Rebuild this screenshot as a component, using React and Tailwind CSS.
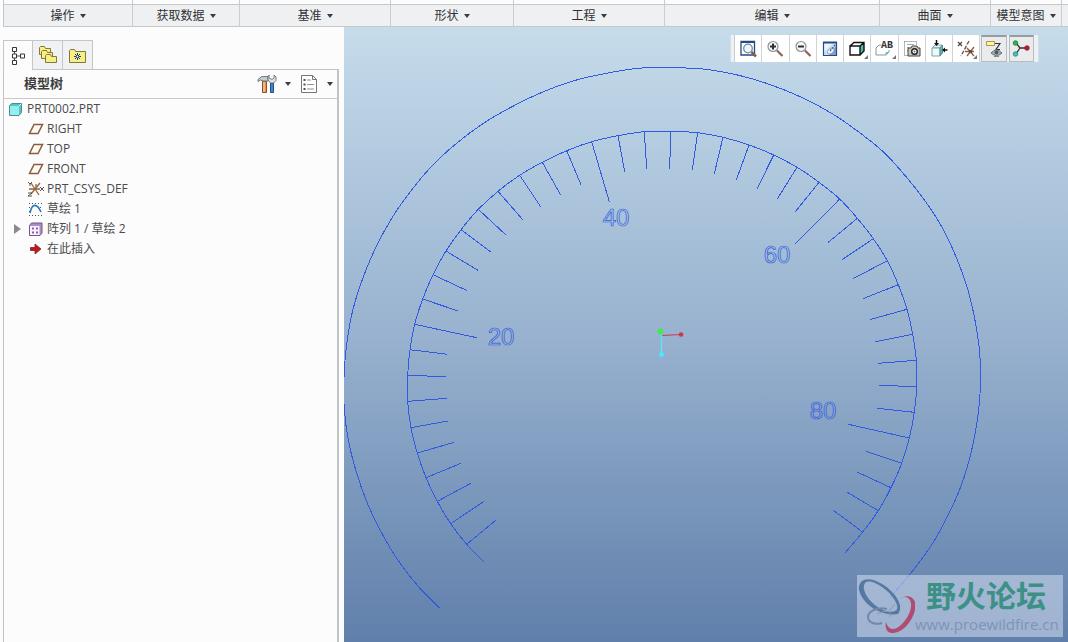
import React from "react";

const menus = [
  { label: "操作", col: "w-[129px]" },
  { label: "获取数据", col: "w-[107px]" },
  { label: "基准", col: "w-[151px]" },
  { label: "形状", col: "w-[123px]" },
  { label: "工程", col: "w-[151px]" },
  { label: "编辑", col: "w-[215px]" },
  { label: "曲面", col: "w-[111px]" },
  { label: "模型意图", col: "w-[71px]" },
];

// Each tick: rim x, rim y, inner x, inner y
const ticks = [
  [466.7, 544.3, 496, 520], [450.7, 523.7, 484, 501.3], [437.3, 501.3, 471.3, 483],
  [426, 477.7, 461, 463.3], [417.3, 453, 454.3, 442.3], [411, 427.7, 447.7, 421],
  [407.7, 401.3, 446.7, 398.3], [407.7, 375.3, 446.3, 376.7], [410, 349.7, 447.3, 354.3],
  [414.7, 324.3, 476.7, 337.7], [422.7, 299, 458.3, 311], [433, 274.7, 467.3, 290.7],
  [446, 251, 478, 270.3], [461, 229.7, 491, 252], [478.3, 209.3, 506, 235],
  [498, 191.3, 523, 220], [519.7, 175.3, 540.7, 206.7], [542.3, 162.3, 560.7, 195],
  [566.7, 150.7, 581, 184.7], [591.7, 141.7, 609.3, 201.7], [618, 135.7, 624.7, 171.7],
  [644.3, 131.7, 646.7, 169], [670.7, 131.3, 669.7, 169], [697.7, 132.7, 692.3, 170],
  [723, 137.3, 714.3, 173.7], [749, 145, 736.3, 180], [773.7, 155, 757, 189],
  [797, 167.3, 777.3, 199], [819, 182.3, 795.3, 211.7], [839.7, 199, 795.3, 244],
  [857.3, 218.3, 828.3, 242.3], [873.3, 238.7, 842, 259.7], [887.3, 260.7, 853, 278.7],
  [898.3, 284.7, 863, 298.7], [907, 309.3, 869.7, 319.7], [912.7, 334.3, 875.3, 341.7],
  [916.3, 360.3, 878.3, 363.3], [916.7, 386.7, 879.3, 385.3], [914.3, 412.3, 877.3, 408.3],
  [909.3, 438, 848.3, 424.3], [901.7, 463.3, 866, 451.3], [891, 487.7, 857, 472],
  [878.3, 510.7, 846.7, 492], [862.7, 532, 833.3, 510.3],
];

const innerArc = [[484, 562], ...ticks.map(([x, y]) => [x, y]), [845, 553]];

// The outer rim is the inner one enlarged about the dial's centre
const outerArc = innerArc.map(([x, y]) => [662 + (x - 662) * 1.25, 381 + (y - 381) * 1.255]);

function smooth(points) {
  let d = `M${points[0][0]} ${points[0][1]}`;
  for (let i = 0; i < points.length - 1; i++) {
    const a = points[Math.max(0, i - 1)];
    const b = points[i];
    const c = points[i + 1];
    const e = points[Math.min(points.length - 1, i + 2)];
    d += `C${b[0] + (c[0] - a[0]) / 6} ${b[1] + (c[1] - a[1]) / 6} ${c[0] - (e[0] - b[0]) / 6} ${c[1] - (e[1] - b[1]) / 6} ${c[0]} ${c[1]}`;
  }
  return d;
}

const tickPath = ticks.map(([a, b, c, d]) => `M${a} ${b}L${c} ${d}`).join("");

function Caret() {
  return (
    <svg width="6" height="4" viewBox="0 0 6 4" aria-hidden="true" className="shrink-0">
      <path d="M0 0h6L3 4z" fill="#3c3c40" />
    </svg>
  );
}

function Svg({ size = 18, children }) {
  return (
    <svg width={size} height={size} viewBox={`0 0 ${size} ${size}`} fill="none" aria-hidden="true" className="shrink-0">
      {children}
    </svg>
  );
}

function MenuBar() {
  return (
    <nav aria-label="功能区" className="flex h-[27px] shrink-0 overflow-hidden bg-[#fcfcfd] pl-[3px]">
      <div className="flex grow border-l border-[#c3c6ca]">
        {menus.map((m) => (
          <div key={m.label} className={`${m.col} shrink-0 border-r border-[#c9cdd1] pt-1`}>
            <button type="button" className="flex h-[23px] w-full items-center justify-center gap-[5px] whitespace-nowrap border-y border-[#c6c9cc] bg-[#eff0f2]">
              {m.label}
              <Caret />
            </button>
          </div>
        ))}
        <div className="grow pt-1">
          <div className="h-[23px] border-y border-[#c6c9cc] bg-[#eff0f2]" />
        </div>
      </div>
    </nav>
  );
}

function Magnifier({ sign }) {
  return (
    <Svg>
      <path d="M11 10.500l5.500 5.500" stroke="#8a6658" strokeWidth="2.200" />
      <circle cx="7" cy="6.500" r="5" fill="#f6f8f8" stroke="#8d9193" strokeWidth="1.200" />
      <path d={sign === "+" ? "M4 6.500h6M7 3.500v6" : "M4 6.500h6"} stroke="#303030" strokeWidth="2" />
    </Svg>
  );
}

const tools = [
  {
    name: "重新调整",
    icon: (
      <Svg>
        <path d="M2 1.500h13.500v13.500H2z" fill="#fff" stroke="#244a83" strokeWidth="1.300" />
        <path d="M2 2h14" stroke="#244a83" strokeWidth="2" />
        <circle cx="9" cy="8.500" r="4.300" fill="#eef5f8" stroke="#72879a" strokeWidth="1.300" />
        <path d="M12.500 12l4.500 4.500" stroke="#7d6259" strokeWidth="2.500" />
      </Svg>
    ),
  },
  { name: "放大", icon: <Magnifier sign="+" /> },
  { name: "缩小", icon: <Magnifier sign="-" /> },
  {
    name: "重画",
    icon: (
      <Svg>
        <path d="M2.500 2.500h13v13h-13z" fill="#cfe0f5" />
        <path d="M3 3h9L3 12z" fill="#edf5fd" />
        <path d="M15 6v9H8z" fill="#7f9fd0" />
        <path d="M7 14c-1-3 0-5 3-6l3 1c0 3-2 5-6 5z" fill="#f3f7fd" stroke="#8296b8" strokeWidth=".8" />
        <path d="M9 11l6-7" stroke="#33507f" strokeWidth="1.200" strokeDasharray="2 1" />
        <path d="M2.500 2.500h13v13h-13z" stroke="#234c89" strokeWidth="1.200" />
        <path d="M2 2.500h14" stroke="#234c89" strokeWidth="2" />
      </Svg>
    ),
  },
  {
    name: "显示样式", more: true,
    icon: (
      <Svg>
        <path d="M2 6l4-3.500h10L12 6z" fill="#fff" />
        <path d="M12 6l4-3.500v8.500l-4 4z" fill="#49b9a8" />
        <path d="M2 6h10v9H2zM2 6l4-3.500h10V11l-4 4M12 6l4-3.500" stroke="#111" strokeWidth="1.400" />
      </Svg>
    ),
  },
  {
    name: "已保存方向", more: true,
    icon: (
      <Svg>
        <path d="M1 15V8l3-3h2M1 15h10l3-3v-2" stroke="#8198a3" />
        <path d="M10 15l1-3h3z" fill="#65bdbd" />
        <text x="6" y="8" fill="#333" className="font-['Liberation_Mono'] text-[10px] font-bold">AB</text>
      </Svg>
    ),
  },
  {
    name: "视图管理器",
    icon: (
      <Svg>
        <path d="M1.500 1.500h12v4M1.500 1.500v14h4" stroke="#6a6c6e" strokeDasharray="1 1" />
        <path d="M4 4.500h7M4 7.500h2M4 10.500h1" stroke="#a4a9ac" />
        <path d="M5 8h3l1-2h5l1 2h2v8H5z" fill="#c9cabb" stroke="#43443f" />
        <circle cx="11.500" cy="11.500" r="2.800" fill="#fff" stroke="#222" strokeWidth="1.400" />
        <circle cx="11.500" cy="11.500" r="1" fill="#777" />
      </Svg>
    ),
  },
  {
    name: "截面",
    icon: (
      <Svg>
        <path d="M2 8l3-3h7l-2 3z" fill="#d9f4f4" stroke="#89a7ac" />
        <path d="M2 8h8v8H2z" fill="#ecfafa" stroke="#82a4a9" />
        <path d="M10 8l2.500-3v8L10 16z" fill="#4ebab8" stroke="#648f91" />
        <path d="M6.500 0v4M17.500 10H14" stroke="#111" strokeWidth="1.500" />
        <path d="M4 3h5L6.500 6zM15 7.500v5L12 10z" fill="#111" />
      </Svg>
    ),
  },
  {
    name: "基准显示过滤器", more: true,
    icon: (
      <Svg>
        <path d="M1 2l4 4M5 2L1 6" stroke="#5c4138" strokeWidth="1.200" />
        <path d="M12 1L4 16" stroke="#765449" strokeWidth="1.400" strokeDasharray="4 1.500" />
        <path d="M10 8l7 8M17 7l-7 9M8 11.500h9" stroke="#8c5f46" strokeWidth="1.300" />
        <path d="M12 10h3v3h-3z" fill="#6d4635" />
      </Svg>
    ),
  },
  {
    name: "注释显示", active: true,
    icon: (
      <Svg>
        <path d="M1.500 1.500h8v4h-8z" fill="#fff4a3" stroke="#a99744" />
        <path d="M10 3.500h5l-4 6h4" stroke="#333" strokeWidth="1.200" />
        <path d="M6 13q5.500-6 11 0q-5.500 5-11 0z" fill="#a3aeb3" stroke="#657278" />
        <circle cx="11.500" cy="12.500" r="1.800" fill="#43545c" />
        <path d="M9 16.500h5" stroke="#81898c" />
      </Svg>
    ),
  },
  {
    name: "旋转中心", active: true,
    icon: (
      <Svg>
        <path d="M4 3l4 5h7M8 8l-4 6" stroke="#333" strokeWidth="1.300" />
        <circle cx="3.500" cy="3" r="2.300" fill="#26b948" stroke="#176e34" strokeWidth=".7" />
        <circle cx="15" cy="8" r="2.300" fill="#c81b2c" stroke="#76111d" strokeWidth=".7" />
        <circle cx="3.500" cy="14" r="2.300" fill="#37cabb" stroke="#24777c" strokeWidth=".7" />
      </Svg>
    ),
  },
];

function ViewToolbar() {
  return (
    <div role="toolbar" aria-label="视图" className="absolute right-[29px] top-2 flex h-[27px] w-[309px] border-x border-[#d6dee5] bg-[#eef1f4] pl-[3px] pr-[3px]">
      <div className="grid grow grid-cols-11 border-l border-[#c9cdd0]">
        {tools.map((t) => (
          <button
            key={t.name}
            type="button"
            aria-label={t.name}
            className={
              t.active
                ? "mx-px flex items-center justify-center border border-t-2 border-[#b9bcbf] border-t-[#999c9f] bg-[#e9ebed]"
                : "relative flex items-center justify-center border-r border-[#cfd3d6] bg-white"
            }
          >
            {t.icon}
            {t.more && (
              <svg width="4" height="4" viewBox="0 0 4 4" aria-hidden="true" className="absolute bottom-[3px] right-[2px]">
                <path d="M4 0v4H0z" fill="#777" />
              </svg>
            )}
          </button>
        ))}
      </div>
    </div>
  );
}

function Plane() {
  return (
    <Svg size={16}>
      <path d="M1.500 12.500L6 3.500h8.500L10 12.500z" fill="#fffaf4" stroke="#8a5a42" strokeWidth="1.5" />
    </Svg>
  );
}

const rows = [
  { label: "RIGHT", icon: <Plane /> },
  { label: "TOP", icon: <Plane /> },
  { label: "FRONT", icon: <Plane /> },
  {
    label: "PRT_CSYS_DEF",
    icon: (
      <Svg size={16}>
        <path d="M3 2l8 12M12 2L3 13M1 8h11M8 8V3" stroke="#94663f" strokeWidth="1.3" />
        <path d="M0 1l2 2 2-2M2 3v2M12 6l4 4M16 6l-4 4M0 12h4l-4 3h4" stroke="#555" />
      </Svg>
    ),
  },
  {
    label: "草绘 1",
    icon: (
      <Svg size={16}>
        <path d="M1 2.500h13M1 6.500h2M12 6.500h2M1 10.500h2M1 14.500h13" stroke="#4b5562" strokeDasharray="1 2" />
        <path d="M2 12C4 2 9 2 13 11" stroke="#2878bf" strokeWidth="1.6" />
      </Svg>
    ),
  },
  {
    label: "阵列 1 / 草绘 2", expandable: true,
    icon: (
      <Svg size={16}>
        <path d="M1.500 4.500l2-2.500H14v10l-2 2.500H1.500z" fill="#aa8cc7" stroke="#76558d" />
        <path d="M2 5h9.500v9H2z" fill="#faf2ff" />
        <path d="M4 6.500h2v2H4zM8 6.500h2v2H8zM4 10.500h2v2H4zM8 10.500h2v2H8z" fill="#8a62ac" />
      </Svg>
    ),
  },
  {
    label: "在此插入",
    icon: (
      <Svg size={16}>
        <path d="M2.500 6.500H7V3l6 5-6 5V9.500H2.500z" fill="#c9141c" stroke="#74242a" strokeWidth=".8" />
      </Svg>
    ),
  },
];

function Folder({ x, y, w = 11, h = 8 }) {
  return (
    <path
      d={`M${x} ${y + h}V${y + 1}l1-1h4l1 2h${w - 6}v${h - 2}z`}
      fill="#f8ee84"
      stroke="#81783b"
    />
  );
}

function ModelTree() {
  return (
    <aside className="flex w-[344px] shrink-0 flex-col bg-[#fcfcfc] pl-[3px] pr-[5px] pt-[13px]">
      <div role="tablist" aria-label="导航器" className="z-10 -mb-px flex h-[30px] w-[90px]">
        <button type="button" role="tab" aria-selected="true" aria-label="模型树" className="flex w-[29px] items-center justify-center border-l border-t border-[#c4c7ca] bg-[#fcfcfc]">
          <Svg size={20}>
            <path d="M6.500 5v10M9 10h5" stroke="#555" />
            <path d="M4.500 1.500h4v4h-4zM4.500 8h4v4h-4zM4.500 14.500h4v4h-4zM12.500 8h4v4h-4z" fill="#fff" stroke="#363636" />
          </Svg>
        </button>
        <button type="button" role="tab" aria-selected="false" aria-label="文件夹浏览器" className="flex w-[31px] items-center justify-center border border-[#c4c7ca] bg-[#f0f1f3]">
          <Svg size={20}>
            <Folder x={1.5} y={1.5} />
            <Folder x={3.5} y={5.5} />
            <Folder x={7.5} y={9.5} />
          </Svg>
        </button>
        <button type="button" role="tab" aria-selected="false" aria-label="收藏夹" className="flex w-[30px] items-center justify-center border border-l-0 border-[#c4c7ca] bg-[#f0f1f3]">
          <Svg size={20}>
            <Folder x={1.5} y={4.5} w={16} h={13} />
            <path d="M9.500 8v7M6 11.500h7M7 9l5 5M12 9l-5 5" stroke="#193b80" />
            <circle cx="9.500" cy="11.500" r="1" fill="#fff" />
          </Svg>
        </button>
      </div>
      <section className="flex grow flex-col border-l border-r-2 border-t border-[#c0c3c5]">
        <header className="flex h-[29px] items-center border-b border-[#c8cacc] pl-5 pr-1">
          <h2 className="grow text-[13px] font-bold text-[#3e3e40]">模型树</h2>
          <button type="button" aria-label="设置" className="flex items-center gap-2">
            <Svg size={20}>
              <path d="M5.500 7h4v11.500h-4z" fill="#e8924c" stroke="#8a5231" />
              <path d="M7 8v10" stroke="#fbd9b6" />
              <path d="M1 5.500q3-4 7-3h3v4.500H6L3.500 6 1 7.500z" fill="#c4cdd0" stroke="#626f74" strokeWidth=".9" />
              <path d="M13.500 9h3v9.500h-3z" fill="#3f86cc" stroke="#26517d" />
              <path d="M12 1v3l3 1.500 2-1.500V1l2 2v3.500l-2.500 2.500h-3l-2.500-3V2.500z" fill="#dde3e5" stroke="#677277" strokeWidth=".9" />
            </Svg>
            <Caret />
          </button>
          <button type="button" aria-label="显示" className="ml-[9px] flex items-center gap-[9px]">
            <Svg size={18}>
              <path d="M1.500 .500h11l4 4v13h-15z" fill="#fff" stroke="#72777a" />
              <path d="M12.500 .500v4h4" stroke="#72777a" />
              <path d="M7 5h4M7 9.500h7M7 14h7" stroke="#8c8f91" />
              <path d="M3.500 4h2v2h-2zM3.500 8.500h2v2h-2zM3.500 13h2v2h-2z" fill="#4a4e50" />
            </Svg>
            <Caret />
          </button>
        </header>
        <ul role="tree" aria-label="模型树" className="text-[#4b4b4e]">
          <li role="treeitem" aria-expanded="true">
            <div className="flex h-5 items-center gap-[3px] pl-1">
              <Svg size={16}>
                <path d="M1.500 4.500L4 2.500h9.500v9l-2.500 3H1.500z" fill="#56c4c6" stroke="#4a8f96" />
                <path d="M2 5h9v9H2z" fill="#93eeee" />
                <path d="M11 5l2-2" stroke="#d4ffff" />
              </Svg>
              PRT0002.PRT
            </div>
            <ul role="group">
              {rows.map((r) => (
                <li key={r.label} role="treeitem" className="flex h-5 items-center pl-[9px]">
                  <span className="w-[15px]">
                    {r.expandable && (
                      <button type="button" aria-label="展开" className="block">
                        <svg width="8" height="10" viewBox="0 0 8 10" aria-hidden="true">
                          <path d="M1 0l7 5-7 5z" fill="#8b8b8b" />
                        </svg>
                      </button>
                    )}
                  </span>
                  {r.icon}
                  <span className="pl-[3px]">{r.label}</span>
                </li>
              ))}
            </ul>
          </li>
        </ul>
      </section>
    </aside>
  );
}

function Watermark() {
  return (
    <div className="absolute bottom-[5px] right-[5px] flex h-[62px] w-[206px] bg-[#d4def0]/55">
      <svg width="58" height="62" viewBox="0 0 58 62" aria-hidden="true" className="shrink-0">
        <path fillRule="evenodd" d="M4 7C10 0 27 7 37 19C45 29 44 35 41 39C31 41 15 36 7 25C2 18 0 12 4 7zM8 8C4 13 10 24 18 30C26 37 38 39 40 34C42 29 34 18 25 12C18 7 11 5 8 8z" fill="#5679a3" />
        <path d="M43 24C52 17 61 24 58 35C55 48 44 59 34 58C29 57 28 52 29 47C32 57 39 55 45 49C54 40 57 27 51 23C48 21 46 22 43 24z" fill="#b04c72" />
        <path d="M30 34C20 31 11 37 11 42C11 48 19 50 25 48" fill="none" stroke="#7189aa" strokeWidth="2" />
        <path d="M20 39C30 34 35 37 33 42M32 36L38 29" fill="none" stroke="#8796b3" />
      </svg>
      <div className="flex flex-col whitespace-nowrap">
        <strong className="pl-[11px] pt-[3px] text-[30px] leading-[36px] text-[#3d9086]">野火论坛</strong>
        <a href="https://www.proewildfire.cn" className="font-['Open_Sans'] text-[15px] leading-5 text-[#7d93b6]">www.proewildfire.cn</a>
      </div>
    </div>
  );
}

function Viewport() {
  return (
    <main className="relative flex min-w-0 grow bg-linear-to-b from-[#c6dceb] via-[#98b2cf] to-[#607faa]">
      <svg viewBox="344 27 724 615" className="min-h-0 w-full grow" role="img" aria-label="刻度盘草绘" fill="none">
        <g stroke="#315ae0" shapeRendering="crispEdges">
          <path d={smooth(outerArc)} />
          <path d={smooth(innerArc)} />
          <path d={tickPath} />
        </g>
        <g stroke="#315ae0" strokeWidth=".7" textAnchor="middle" className="font-['Liberation_Sans'] text-[24px]">
          <text x="501" y="345">20</text>
          <text x="616" y="226">40</text>
          <text x="777" y="263">60</text>
          <text x="823" y="419">80</text>
        </g>
        <path d="M662 335.500l19-1" stroke="#cf3852" />
        <path d="M661.500 334v20" stroke="#5be6f4" strokeWidth="1.5" />
        <circle cx="681" cy="334.500" r="2.300" fill="#cf3842" />
        <circle cx="661.500" cy="354.500" r="2.500" fill="#4be9fa" />
        <circle cx="660.500" cy="331.500" r="3" fill="#40ec49" />
      </svg>
      <ViewToolbar />
      <Watermark />
    </main>
  );
}

export default function App() {
  return (
    <div className="flex min-h-screen flex-col bg-[#fcfcfc] font-['Open_Sans','Noto_Sans_CJK_SC',sans-serif] text-xs text-[#303034]">
      <MenuBar />
      <div className="flex grow">
        <ModelTree />
        <Viewport />
      </div>
    </div>
  );
}
